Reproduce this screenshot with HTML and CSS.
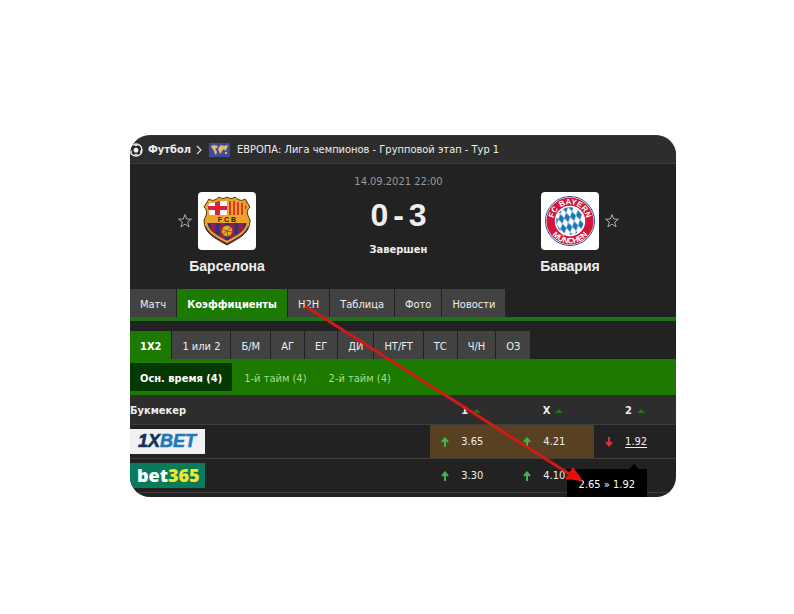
FILE: index.html
```html
<!DOCTYPE html>
<html lang="ru">
<head>
    <meta charset="UTF-8">
    <meta name="viewport" content="width=device-width, initial-scale=1.0">
    <title>Барселона - Бавария</title>
    <link rel="stylesheet" href="styles.css">
</head>
<body>
    <main class="card">
        <nav class="breadcrumb">
            <svg class="ball" viewBox="0 0 14 14" aria-hidden="true">
                <circle cx="6" cy="7" r="6" fill="#222" stroke="#eee" stroke-width="1.4"/>
                <path d="M6 4.2l2.7 2-1 3.2H4.3l-1-3.2z" fill="#eee"/>
                <path d="M3.6 1.4L6 2.8l2.4-1.4M0 6l1.6 2.2L1 10.6M12 6l-1.6 2.2.6 2.4M4.2 12.8l.6-1.4h2.4l.6 1.4" fill="none" stroke="#eee"/>
            </svg>
            <a href="#" class="sport">Футбол</a>
            <svg class="chevron" viewBox="0 0 6 10" aria-hidden="true">
                <path d="M1 1l4 4-4 4" fill="none" stroke="#ddd" stroke-width="1.2"/>
            </svg>
            <svg class="flag" viewBox="0 0 21 14" aria-hidden="true">
                <path d="M0 0h21v14H0z" fill="#4048a0"/>
                <path d="M2 3l3-1 4 1-1 2-2 1 1 1 1 2-1 3-1-1-1-3-2-3zM10 4l2-2 3 1 3-1 1 1-1 2-1 2-1 1-1-2-1 1-1 1-1 2-1 1-1-3-1-1zM16 9l2 0 0 2-2 0z" fill="#e4bd63"/>
            </svg>
            <a href="#" class="league">ЕВРОПА: Лига чемпионов - Групповой этап - Тур 1</a>
        </nav>

        <section class="match">
            <div class="team team-home">
                <div class="team-row">
                    <button class="star" aria-label="Барселона в избранное">
                        <svg viewBox="0 0 16 16"><path d="M8 1.5l1.7 4.6h4.8l-3.8 3 1.4 4.8L8 11.1l-4.1 2.8 1.4-4.8-3.8-3h4.8z"/></svg>
                    </button>
                    <div class="logo">
                        <svg viewBox="0 0 58 58" role="img" aria-label="Барселона">
                            <clipPath id="shield"><path d="M11 7c3 2 6 2 10-2 3 2 5 2 8 0 3 2 5 2 8 0 4 4 7 4 10 2l5 8c-4 4-3 7 0 13 0 13-9 17-23 25C15 45 6 41 6 28c3-6 4-9 0-13z"/></clipPath>
                            <g clip-path="url(#shield)">
                                <path d="M0 0h58v58H0z" fill="#eaa52b"/>
                                <path d="M10 9h19v14H10z" fill="#fff"/>
                                <path d="M17 9h5v14h-5zM10 14h19v4H10z" fill="#d9213b"/>
                                <path d="M32 9v14M36 9v14M40 9v14M44 9v14M48 9v14" stroke="#d63a2b" stroke-width="2"/>
                                <path d="M8 31h42v8l-5 7-16 9-16-9-5-7z" fill="#303577"/>
                                <path d="M15 31v25M24 31v25M34 31v25M43 31v25" stroke="#981f49" stroke-width="5"/>
                            </g>
                            <path d="M12 9c3 2 6 1 9-2 3 2 5 2 8 0 3 2 5 2 8 0 3 3 6 4 9 2l4 6c-3 4-3 7 0 13 0 11-8 15-21 22C16 43 8 39 8 28c3-6 3-9 0-13z" fill="none" stroke="#eaa52b" stroke-width="2"/>
                            <path d="M11 7c3 2 6 2 10-2 3 2 5 2 8 0 3 2 5 2 8 0 4 4 7 4 10 2l5 8c-4 4-3 7 0 13 0 13-9 17-23 25C15 45 6 41 6 28c3-6 4-9 0-13z" fill="none" stroke="#463018"/>
                            <circle cx="29" cy="39" r="5.5" fill="#eba92f" stroke="#7b4a22" stroke-width=".7"/>
                            <path d="M24 37l5 2 4-4M29 39l1 5M25 42l4-3 5 1" fill="none" stroke="#7b4a22" stroke-width=".8"/>
                            <text class="fcb" x="29" y="30" text-anchor="middle">F C B</text>
                        </svg>
                    </div>
                </div>
                <a href="#" class="team-name">Барселона</a>
            </div>

            <div class="result">
                <time class="date" datetime="2021-09-14T22:00">14.09.2021 22:00</time>
                <div class="score"><span>0</span> <span>-</span> <span>3</span></div>
                <div class="status">Завершен</div>
            </div>

            <div class="team team-away">
                <div class="team-row">
                    <div class="logo">
                        <svg viewBox="0 0 58 58" role="img" aria-label="Бавария">
                            <defs>
                                <path id="arc-top" d="M12.5 29a16.5 16.5 0 0 1 33 0"/>
                                <path id="arc-bottom" d="M6.5 29a22.5 22.5 0 0 0 45 0"/>
                                <pattern id="diamonds" width="6" height="10" patternUnits="userSpaceOnUse" patternTransform="rotate(-12 29 29)">
                                    <path d="M0 0h6v10H0z" fill="#fff"/>
                                    <path d="M3 0l3 5-3 5-3-5z" fill="#1975b7"/>
                                </pattern>
                            </defs>
                            <circle cx="29" cy="29" r="24.5" fill="#fff" stroke="#27548d" stroke-width="1"/>
                            <circle cx="29" cy="29" r="23.5" fill="#d5153a"/>
                            <circle cx="29" cy="29" r="14.5" fill="url(#diamonds)" stroke="#fff" stroke-width="1.5"/>
                            <text class="bayern"><textPath href="#arc-top" startOffset="50%" text-anchor="middle">FC BAYERN</textPath></text>
                            <text class="bayern"><textPath href="#arc-bottom" startOffset="50%" text-anchor="middle">MÜNCHEN</textPath></text>
                        </svg>
                    </div>
                    <button class="star" aria-label="Бавария в избранное">
                        <svg viewBox="0 0 16 16"><path d="M8 1.5l1.7 4.6h4.8l-3.8 3 1.4 4.8L8 11.1l-4.1 2.8 1.4-4.8-3.8-3h4.8z"/></svg>
                    </button>
                </div>
                <a href="#" class="team-name">Бавария</a>
            </div>
        </section>

        <nav class="tabs main-tabs">
            <a href="#">Матч</a>
            <a href="#" class="active">Коэффициенты</a>
            <a href="#">H2H</a>
            <a href="#">Таблица</a>
            <a href="#">Фото</a>
            <a href="#">Новости</a>
        </nav>

        <nav class="tabs bet-tabs">
            <a href="#" class="active">1X2</a>
            <a href="#">1 или 2</a>
            <a href="#">Б/М</a>
            <a href="#">АГ</a>
            <a href="#">ЕГ</a>
            <a href="#">ДИ</a>
            <a href="#">HT/FT</a>
            <a href="#">ТС</a>
            <a href="#">Ч/Н</a>
            <a href="#">ОЗ</a>
        </nav>

        <nav class="periods">
            <a href="#" class="active">Осн. время (4)</a>
            <a href="#">1-й тайм (4)</a>
            <a href="#">2-й тайм (4)</a>
        </nav>

        <table class="odds">
            <thead>
                <tr>
                    <th class="bookmaker">Букмекер</th>
                    <th><button class="sort">1 <i class="caret"></i></button></th>
                    <th><button class="sort">X <i class="caret"></i></button></th>
                    <th><button class="sort">2 <i class="caret"></i></button></th>
                </tr>
            </thead>
            <tbody>
                <tr>
                    <td class="bookmaker">
                        <a href="#" class="brand">
                            <svg viewBox="0 0 75 25" role="img" aria-label="1XBET">
                                <path d="M0 0h75v25H0z" fill="#f0f1f3"/>
                                <text class="xbet" x="8" y="18"><tspan fill="#173258" stroke="#173258">1X</tspan><tspan fill="#2379b8" stroke="#2379b8">BET</tspan></text>
                            </svg>
                        </a>
                    </td>
                    <td class="best"><a href="#" class="odd"><svg class="up" viewBox="0 0 8 10"><path d="M4 10V1.5M1 5l3-3.5L7 5"/></svg><span>3.65</span></a></td>
                    <td class="best"><a href="#" class="odd"><svg class="up" viewBox="0 0 8 10"><path d="M4 10V1.5M1 5l3-3.5L7 5"/></svg><span>4.21</span></a></td>
                    <td class="hovered">
                        <a href="#" class="odd"><svg class="down" viewBox="0 0 8 10"><path d="M4 0v8.5M1 5l3 3.5L7 5"/></svg><span>1.92</span></a>
                        <div class="tooltip" role="tooltip">2.65 » 1.92</div>
                    </td>
                </tr>
                <tr>
                    <td class="bookmaker">
                        <a href="#" class="brand">
                            <svg viewBox="0 0 75 25" role="img" aria-label="bet365">
                                <path d="M0 0h75v25H0z" fill="#087b5b"/>
                                <text class="bet365" x="7" y="19"><tspan fill="#fff">bet</tspan><tspan fill="#f4e52c">365</tspan></text>
                            </svg>
                        </a>
                    </td>
                    <td><a href="#" class="odd"><svg class="up" viewBox="0 0 8 10"><path d="M4 10V1.5M1 5l3-3.5L7 5"/></svg><span>3.30</span></a></td>
                    <td><a href="#" class="odd"><svg class="up" viewBox="0 0 8 10"><path d="M4 10V1.5M1 5l3-3.5L7 5"/></svg><span>4.10</span></a></td>
                    <td></td>
                </tr>
            </tbody>
        </table>

        <!-- arrow from the H2H tab to the odds change -->
        <svg class="pointer" viewBox="0 0 546 362" aria-hidden="true">
            <path d="M175 170L441 339" stroke="#d11a14" stroke-width="3"/>
            <path d="M453 345L435 343l8-12z" fill="#f00b0b"/>
        </svg>
    </main>
</body>
</html>
```
FILE: styles.css
```css
body {
    margin: 0;
    padding: 135px 118px 0 130px;
    background: #fff;
    font-family: "DejaVu Sans Condensed", "DejaVu Sans", Tahoma, sans-serif;
    font-size: 11px;
    line-height: 14px;
    color: #eee;
}
a {
    color: inherit;
    text-decoration: none;
}
button {
    padding: 0;
    border: none;
    background: none;
    color: inherit;
    font: inherit;
    cursor: pointer;
}
svg {
    display: block;
}
.card {
    position: relative;
    overflow: hidden;
    box-sizing: border-box;
    padding-bottom: 4px;
    border-top: 1px solid #1f4a1c;
    border-radius: 20px;
    background: #222;
}

/* Breadcrumb */
.breadcrumb {
    display: flex;
    align-items: center;
    padding: 7px 0 6px;
    border-bottom: 1px solid #3a3a3a;
    background: #2d2d2d;
}
.ball {
    width: 14px;
    height: 14px;
}
.sport {
    margin: 0 5px 0 4px;
    font-weight: bold;
}
.chevron {
    width: 6px;
    height: 10px;
}
.flag {
    width: 21px;
    height: 14px;
    margin: 0 7px;
}

/* Match header */
.match {
    display: grid;
    grid-template-columns: 194px 1fr 194px;
    padding: 0 9px 14px 0;
}
.team {
    padding-top: 28px;
    text-align: center;
}
.team-row {
    display: grid;
    grid-template-columns: 1fr 58px 1fr;
    align-items: center;
    gap: 5px;
    margin-bottom: 7px;
}
.logo {
    grid-column: 2;
    height: 58px;
    border-radius: 4px;
    background: #fff;
}
.star {
    width: 16px;
    height: 16px;
}
.team-home .star {
    justify-self: end;
}
.star path {
    fill: none;
    stroke: #aaa;
}
.team-name {
    font: bold 14px/18px "Liberation Sans", Arial, sans-serif;
}
.fcb {
    font: bold 7px "Liberation Sans", Arial, sans-serif;
    fill: #2b1c10;
}
.bayern {
    font: bold 8px "Liberation Sans", Arial, sans-serif;
    fill: #fff;
}
.result {
    padding-top: 11px;
    text-align: center;
}
.date {
    color: #999;
}
.score {
    display: flex;
    justify-content: center;
    gap: 5px;
    margin: 9px 0 11px;
    font: bold 32px/34px "Liberation Sans", Arial, sans-serif;
}
.status {
    font-weight: bold;
}

/* Tabs */
.tabs {
    display: flex;
    gap: 1px;
}
.tabs a {
    padding: 9px 10px 5px;
    background: #424242;
}
.tabs .active {
    background: #1d7a00;
    color: #fff;
    font-weight: bold;
}
.main-tabs {
    border-bottom: 4px solid #1f7316;
}
.bet-tabs {
    margin-top: 10px;
}

/* Match periods */
.periods {
    display: flex;
    gap: 2px;
    padding: 4px 0;
    background: #1d7a00;
    color: #a5dc90;
}
.periods a {
    padding: 9px 10px 5px;
}
.periods .active {
    background: #033800;
    color: #fff;
    font-weight: bold;
}

/* Odds table */
.odds {
    width: 100%;
    border-collapse: separate;
    border-spacing: 0;
    table-layout: fixed;
}
.odds th {
    width: 15%;
    height: 27px;
    padding: 2px 0 0;
    border-bottom: 1px solid #3d3d3d;
    background: #2d2d2d;
}
.odds td {
    height: 33px;
    padding: 0;
    border-bottom: 1px solid #3d3d3d;
}
.odds .bookmaker {
    width: 55%;
    text-align: left;
}
.sort {
    display: inline-flex;
    align-items: center;
    gap: 5px;
}
.caret {
    border: 4px solid transparent;
    border-top: none;
    border-bottom: 4px solid #28701a;
}
.brand {
    display: block;
    width: 75px;
}
.xbet {
    font: italic bold 18px "Liberation Sans", Arial, sans-serif;
    stroke-width: 0.6px;
}
.bet365 {
    font: 800 18px "Open Sans", "Noto Sans", sans-serif;
}
.odds .best {
    background: #574122;
}
.odd {
    display: flex;
    align-items: center;
    gap: 12px;
    padding: 1px 0 0 11px;
}
.odd svg {
    width: 8px;
    height: 10px;
    fill: none;
    stroke-width: 2;
}
.up {
    stroke: #43b649;
}
.down {
    stroke: #d8323c;
}
.hovered {
    position: relative;
}
.hovered span {
    text-decoration: underline;
    text-underline-offset: 2px;
}
.tooltip {
    position: absolute;
    top: 44px;
    right: 29px;
    padding: 9px 12px 8px;
    background: #000;
    color: #fff;
    white-space: nowrap;
}
.tooltip::before {
    content: "";
    position: absolute;
    right: 8px;
    bottom: 100%;
    border: 5px solid transparent;
    border-top: none;
    border-bottom-color: #000;
}

.pointer {
    position: absolute;
    top: 0;
    left: 0;
    width: 100%;
}
```
